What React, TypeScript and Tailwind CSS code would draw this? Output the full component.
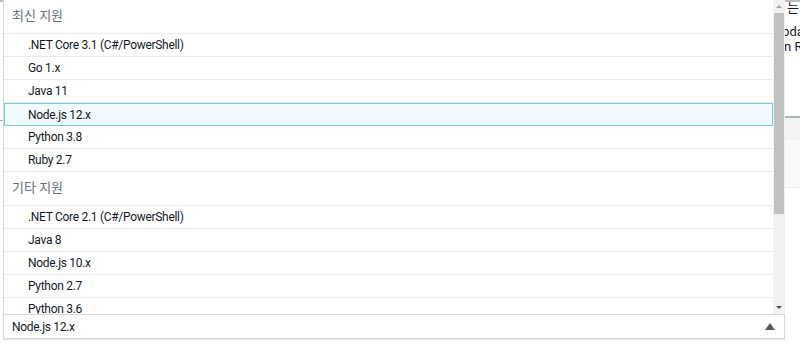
import React from "react";

type Item = { label: string; header?: boolean; selected?: boolean };

const ITEMS: Item[] = [
  { label: "최신 지원", header: true },
  { label: ".NET Core 3.1 (C#/PowerShell)" },
  { label: "Go 1.x" },
  { label: "Java 11" },
  { label: "Node.js 12.x", selected: true },
  { label: "Python 3.8" },
  { label: "Ruby 2.7" },
  { label: "기타 지원", header: true },
  { label: ".NET Core 2.1 (C#/PowerShell)" },
  { label: "Java 8" },
  { label: "Node.js 10.x" },
  { label: "Python 2.7" },
  { label: "Python 3.6" },
];

const font = { fontFamily: "Roboto, 'Noto Sans CJK KR', sans-serif" };

export default function App() {
  return (
    <div className="relative w-[800px] h-[356px] bg-white overflow-hidden text-[#16191f]" style={font}>
      {/* page behind the dropdown */}
      <div className="h-[2px] bg-[#b7bfc2]" />
      <div className="flex justify-between">
        <div className="w-[3px]">
          <div className="mt-[118px] h-[1px] bg-[#9fb4bd]" />
        </div>
        <div className="w-[16px] text-[13px] leading-[15px] text-[#16191f] whitespace-nowrap overflow-hidden">
          <div className="-mt-[2px] pl-[3px]">는 일</div>
          <div className="mt-[9px] -ml-[2px]">oda</div>
          <div className="mt-[0px]">n R</div>
          <div className="mt-[62px] border-t-2 border-[#aab7b8] h-[24px] bg-[#f2f3f3]" />
          <div className="h-[48px] bg-[#fafafa] border-b border-[#eaeded]" />
        </div>
      </div>

      {/* dropdown list, overlays the page */}
      <div className="absolute left-[3px] top-0 w-[782px] h-[314px] bg-white border-l border-[#d5dbdb] flex">
        <div className="flex-1 overflow-hidden">
          {ITEMS.map((it, i) =>
            it.header ? (
              <div
                key={i}
                className="h-[34px] pl-[8px] flex items-center text-[13px] text-[#687078] border-b border-[#eaeded] pb-[1px]"
              >
                {it.label}
              </div>
            ) : it.selected ? (
              <div
                key={i}
                className="h-[23px] pl-[23px] flex items-center text-[12px] tracking-[-0.3px] bg-[#f1faff] border border-[#79c9dd]"
              >
                {it.label}
              </div>
            ) : (
              <div
                key={i}
                className="h-[23px] pl-[24px] flex items-center text-[12px] tracking-[-0.3px] border-b border-[#eaeded]"
              >
                {it.label}
              </div>
            )
          )}
        </div>
        {/* scrollbar */}
        <div className="w-[12px] bg-[#f1f1f1] flex flex-col items-center">
          <div className="h-[13px] flex items-center justify-center">
            <div className="w-0 h-0 border-l-[3px] border-r-[3px] border-b-[3px] border-l-transparent border-r-transparent border-b-[#a3a3a3]" />
          </div>
          <div className="w-[10px] h-[201px] bg-[#c1c1c1]" />
          <div className="flex-1" />
          <div className="h-[13px] flex items-center justify-center">
            <div className="w-0 h-0 border-l-[3px] border-r-[3px] border-t-[3px] border-l-transparent border-r-transparent border-t-[#505050]" />
          </div>
        </div>
      </div>

      {/* select trigger */}
      <div className="absolute left-[3px] top-[314px] w-[782px] h-[25px] bg-white border border-[#d5dbdb] shadow-[0_1px_1px_rgba(0,28,36,0.1)] flex items-center pl-[8px] pr-[9px] text-[12px] tracking-[-0.3px]">
        <span className="flex-1">Node.js 12.x</span>
        <div className="w-0 h-0 border-l-[5px] border-r-[5px] border-b-[7px] border-l-transparent border-r-transparent border-b-[#545b64]" />
      </div>
    </div>
  );
}
